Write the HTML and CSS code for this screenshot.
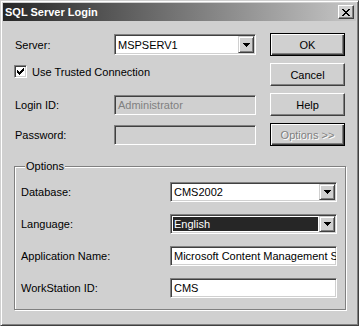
FILE: index.html
```html
<!DOCTYPE html>
<html lang="en">

<head>
    <meta charset="UTF-8">
    <meta name="viewport" content="width=device-width, initial-scale=1.0">
    <title>SQL Server Login</title>
    <link rel="stylesheet" href="styles.css">
</head>

<body>
    <div class="window">
        <div class="titlebar">
            <span class="titlebar__text">SQL Server Login</span>
            <span class="titlebar__close">
                <svg width="8" height="7" viewBox="0 0 8 7" shape-rendering="crispEdges">
                    <path d="M0 0h2v1H0zM6 0h2v1H6zM1 1h2v1H1zM5 1h2v1H5zM2 2h4v1H2zM3 3h2v1H3zM2 4h4v1H2zM1 5h2v1H1zM5 5h2v1H5zM0 6h2v1H0zM6 6h2v1H6z" fill="#000"/>
                </svg>
            </span>
        </div>

        <div class="login">
            <span class="login__label">Server:</span>
            <div class="combo">
                <span class="combo__value">MSPSERV1</span>
                <span class="combo__arrow">
                    <svg width="7" height="4" viewBox="0 0 7 4" shape-rendering="crispEdges">
                        <path d="M0 0h7v1H0zM1 1h5v1H1zM2 2h3v1H2zM3 3h1v1H3z" fill="#000"/>
                    </svg>
                </span>
            </div>
            <div class="btn btn--default">OK</div>

            <div class="check">
                <span class="check__box">
                    <svg width="7" height="7" viewBox="0 0 7 7" shape-rendering="crispEdges">
                        <path d="M6 0h1v1H6zM5 1h2v1H5zM0 2h1v1H0zM4 2h3v1H4zM0 3h2v1H0zM3 3h3v1H3zM0 4h5v1H0zM1 5h3v1H1zM2 6h1v1H2z" fill="#000"/>
                    </svg>
                </span>
                <span>Use Trusted Connection</span>
            </div>
            <div class="btn">Cancel</div>

            <span class="login__label">Login ID:</span>
            <div class="textbox textbox--disabled">Administrator</div>
            <div class="btn">Help</div>

            <span class="login__label">Password:</span>
            <div class="textbox textbox--disabled"></div>
            <div class="btn btn--default btn--disabled">Options &gt;&gt;</div>
        </div>

        <fieldset class="options">
            <legend class="options__legend">Options</legend>
            <div class="options__grid">
                <span class="login__label">Database:</span>
                <div class="combo">
                    <span class="combo__value">CMS2002</span>
                    <span class="combo__arrow">
                        <svg width="7" height="4" viewBox="0 0 7 4" shape-rendering="crispEdges">
                            <path d="M0 0h7v1H0zM1 1h5v1H1zM2 2h3v1H2zM3 3h1v1H3z" fill="#000"/>
                        </svg>
                    </span>
                </div>

                <span class="login__label">Language:</span>
                <div class="combo">
                    <span class="combo__value combo__value--selected">English</span>
                    <span class="combo__arrow">
                        <svg width="7" height="4" viewBox="0 0 7 4" shape-rendering="crispEdges">
                            <path d="M0 0h7v1H0zM1 1h5v1H1zM2 2h3v1H2zM3 3h1v1H3z" fill="#000"/>
                        </svg>
                    </span>
                </div>

                <span class="login__label">Application Name:</span>
                <div class="textbox">Microsoft Content Management Server</div>

                <span class="login__label">WorkStation ID:</span>
                <div class="textbox">CMS</div>
            </div>
        </fieldset>
    </div>
</body>

</html>
```

FILE: styles.css
```css
* {
    box-sizing: border-box;
}

html,
body {
    margin: 0;
    padding: 0;
    width: 100%;
    height: 100%;
}

body {
    overflow: hidden;
    font-family: 'Liberation Sans', Arial, sans-serif;
    font-size: 11px;
    color: #000;
    background-color: #d0d0d0;
}

.window {
    width: 359px;
    height: 326px;
    padding: 2px;
    border: 1px solid;
    border-color: #d0d0d0 #404040 #404040 #d0d0d0;
    box-shadow: inset 1px 1px #fff, inset -1px -1px #808080;
    background-color: #d0d0d0;
}

.titlebar {
    height: 18px;
    display: flex;
    align-items: center;
    justify-content: space-between;
    padding: 0 2px;
    background: linear-gradient(to right, #262626, #c6c6c6);
}

.titlebar__text {
    color: #fff;
    font-weight: bold;
    font-size: 11px;
}

.titlebar__close {
    width: 16px;
    height: 14px;
    display: flex;
    align-items: center;
    justify-content: center;
    background-color: #d0d0d0;
    border: 1px solid;
    border-color: #fff #404040 #404040 #fff;
    box-shadow: inset -1px -1px #808080;
}

.login {
    display: grid;
    grid-template-columns: 85px 142px 75px;
    grid-auto-rows: 23px;
    column-gap: 14px;
    row-gap: 7px;
    align-items: center;
    padding: 12px 0 0 12px;
}

.check {
    grid-column: 1 / 3;
    align-self: start;
    display: flex;
    align-items: center;
    gap: 5px;
    margin: 2px 0 0 -1px;
}

.check__box {
    width: 13px;
    height: 13px;
    display: flex;
    align-items: center;
    justify-content: center;
    background-color: #fff;
    border: 1px solid;
    border-color: #808080 #fff #fff #808080;
    box-shadow: inset 1px 1px #404040, inset -1px -1px #d0d0d0;
}

.btn {
    height: 23px;
    display: flex;
    align-items: center;
    justify-content: center;
    background-color: #d0d0d0;
    border: 1px solid;
    border-color: #fff #404040 #404040 #fff;
    box-shadow: inset -1px -1px #808080;
}

.btn--default {
    border-color: #000;
    box-shadow: inset 1px 1px #fff, inset -1px -1px #404040, inset -2px -2px #808080;
}

.btn--disabled {
    color: #808080;
    text-shadow: 1px 1px #fff;
}

.combo {
    height: 21px;
    display: flex;
    padding: 1px;
    background-color: #fff;
    border: 1px solid;
    border-color: #808080 #fff #fff #808080;
    box-shadow: inset 1px 1px #404040, inset -1px -1px #d0d0d0;
}

.combo__value {
    flex: 1;
    display: flex;
    align-items: center;
    padding-left: 2px;
    white-space: nowrap;
    overflow: hidden;
}

.combo__value--selected {
    margin: 1px;
    padding-left: 1px;
    color: #fff;
    background-color: #262626;
}

.combo__arrow {
    width: 16px;
    display: flex;
    align-items: center;
    justify-content: center;
    background-color: #d0d0d0;
    border: 1px solid;
    border-color: #d0d0d0 #404040 #404040 #d0d0d0;
    box-shadow: inset 1px 1px #fff, inset -1px -1px #808080;
}

.textbox {
    height: 20px;
    display: flex;
    align-items: center;
    padding: 0 3px;
    white-space: nowrap;
    overflow: hidden;
    background-color: #fff;
    border: 1px solid;
    border-color: #808080 #fff #fff #808080;
    box-shadow: inset 1px 1px #404040, inset -1px -1px #d0d0d0;
}

.textbox--disabled {
    color: #808080;
    background-color: #d0d0d0;
}

.options {
    width: 332px;
    height: 150px;
    margin: 14px 0 0 11px;
    padding: 9px 8px 0 6px;
    border: 1px solid #808080;
    box-shadow: 1px 1px #fff, inset 1px 1px #fff;
}

.options__legend {
    height: 13px;
    line-height: 13px;
    padding: 0 1px;
    margin-left: 4px;
    background-color: #d0d0d0;
}

.options__grid {
    display: grid;
    grid-template-columns: 149px 167px;
    grid-auto-rows: 20px;
    row-gap: 12px;
    align-items: center;
}

.options__grid .combo {
    height: 20px;
}
```
